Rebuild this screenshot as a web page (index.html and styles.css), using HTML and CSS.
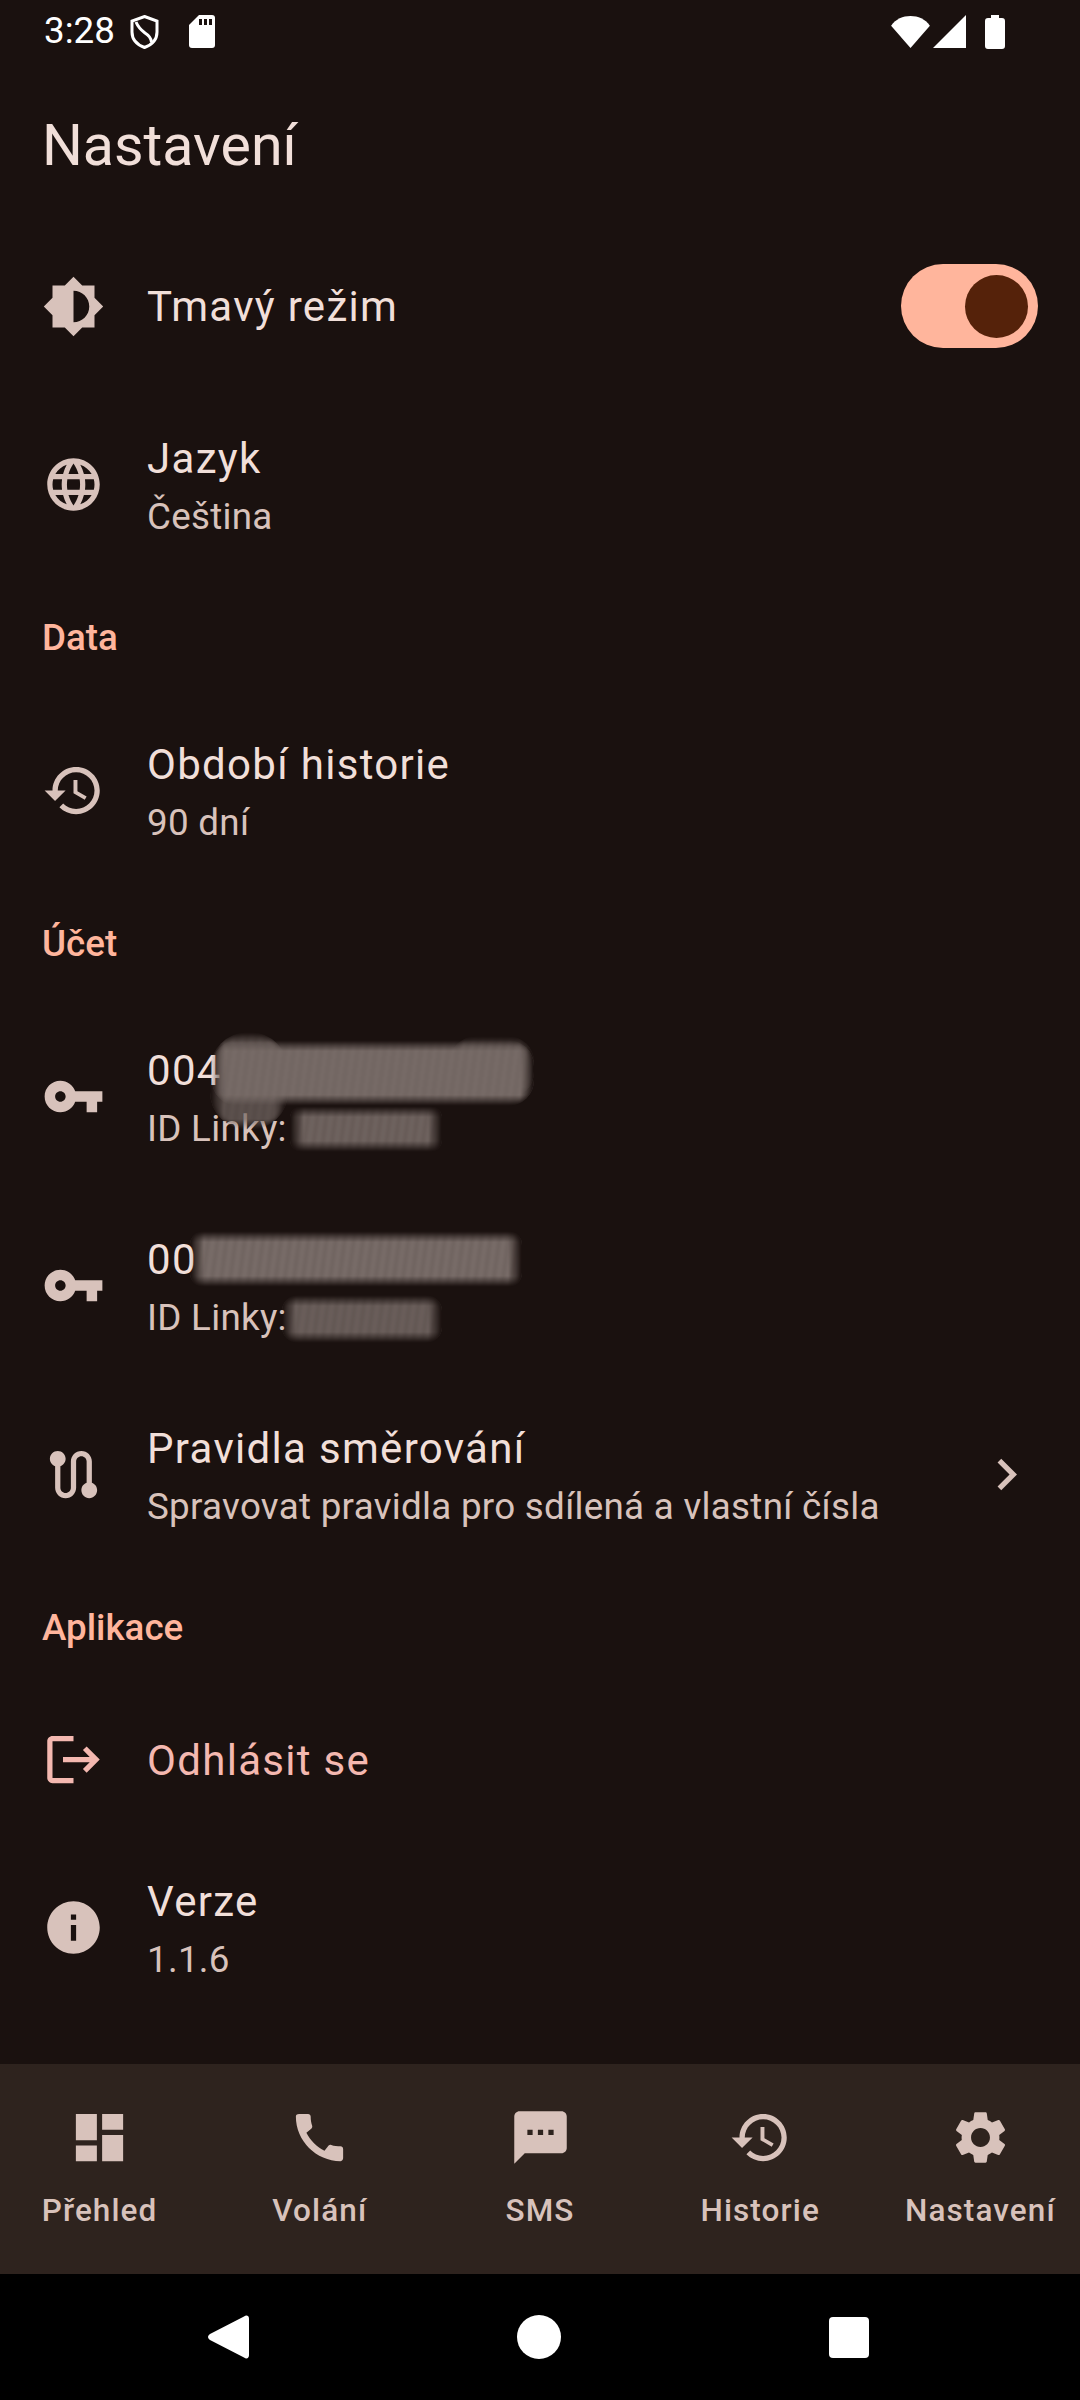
FILE: index.html
```html
<!DOCTYPE html>
<html lang="cs">
<head>
<meta charset="utf-8">
<title>Nastavení</title>
<link rel="stylesheet" href="styles.css">
</head>
<body>
<div class="screen">
  <div class="status">
    <span class="time">3:28</span>
    <svg class="st-shield" viewBox="0 0 29 34"><path d="M14.5 1.5 27 6v11c0 7.5-5.2 12.8-12.5 15.5C7.2 29.8 2 24.5 2 17V6z" fill="none" stroke="#fff" stroke-width="3"/><path d="M6 7c2 5 5 8 9 11 4 2.5 6 5 6.500 9" fill="none" stroke="#fff" stroke-width="3"/></svg>
    <svg class="st-sd" viewBox="0 0 26 33"><path d="M10 0h13a3 3 0 0 1 3 3v27a3 3 0 0 1-3 3H3a3 3 0 0 1-3-3V10z" fill="#fff"/><path d="M10 4h3v6h-3zM15 4h3v6h-3zM20 4h3v6h-3z" fill="#1a110f"/></svg>
    <span class="st-spacer"></span>
    <svg class="st-wifi" viewBox="0 0 40 33"><path d="M20 33 0 10C5 3 12 0 20 0s15 3 20 10z" fill="#fff"/></svg>
    <svg class="st-signal" viewBox="0 0 33 33"><path d="M33 0v33H0z" fill="#fff"/></svg>
    <svg class="st-batt" viewBox="0 0 20 34"><path d="M6 0h8v3h3a3 3 0 0 1 3 3v25a3 3 0 0 1-3 3H3a3 3 0 0 1-3-3V6a3 3 0 0 1 3-3h3z" fill="#fff"/></svg>
  </div>

  <main class="content">
    <h1 class="title">Nastavení</h1>

    <div class="row row-switch">
      <svg class="icon" viewBox="0 0 24 24"><path d="M20 15.31 23.31 12 20 8.69V4h-4.69L12 .69 8.69 4H4v4.690L.69 12 4 15.31V20h4.69L12 23.31 15.31 20H20v-4.690zM12 18V6c3.31 0 6 2.69 6 6s-2.69 6-6 6z"/></svg>
      <div class="texts"><div class="t1">Tmavý režim</div></div>
      <div class="switch"><span class="thumb"></span></div>
    </div>

    <div class="row row-two">
      <svg class="icon" viewBox="0 0 24 24"><path d="M11.99 2C6.47 2 2 6.48 2 12s4.47 10 9.99 10C17.52 22 22 17.52 22 12S17.52 2 11.99 2zm6.93 6h-2.95c-.32-1.25-.78-2.45-1.38-3.56 1.84.63 3.37 1.91 4.33 3.56zM12 4.04c.83 1.2 1.48 2.53 1.91 3.96h-3.82c.43-1.43 1.08-2.76 1.91-3.96zM4.26 14C4.1 13.36 4 12.69 4 12s.1-1.36.26-2h3.38c-.08.66-.14 1.32-.14 2 0 .68.06 1.34.14 2H4.26zm.82 2h2.95c.32 1.25.78 2.45 1.38 3.56-1.84-.63-3.37-1.9-4.33-3.56zm2.95-8H5.08c.96-1.66 2.49-2.93 4.33-3.56C8.81 5.55 8.35 6.75 8.03 8zM12 19.96c-.83-1.2-1.48-2.53-1.91-3.96h3.82c-.43 1.43-1.08 2.76-1.91 3.96zM14.34 14H9.66c-.09-.66-.16-1.32-.16-2 0-.68.07-1.35.16-2h4.68c.09.65.16 1.32.16 2 0 .68-.07 1.34-.16 2zm.25 5.56c.6-1.11 1.06-2.31 1.38-3.56h2.95c-.96 1.65-2.49 2.93-4.33 3.56zM16.36 14c.08-.66.14-1.32.14-2 0-.68-.06-1.34-.14-2h3.38c.16.64.26 1.31.26 2s-.1 1.36-.26 2h-3.38z"/></svg>
      <div class="texts"><div class="t1">Jazyk</div><div class="t2">Čeština</div></div>
    </div>

    <div class="section">Data</div>

    <div class="row row-two">
      <svg class="icon" viewBox="0 0 24 24"><path d="M13 3c-4.97 0-9 4.030-9 9H1l3.89 3.89.07.14L9 12H6c0-3.87 3.13-7 7-7s7 3.13 7 7-3.13 7-7 7c-1.93 0-3.68-.79-4.94-2.060l-1.42 1.42C8.27 19.99 10.51 21 13 21c4.97 0 9-4.030 9-9s-4.030-9-9-9zm-1 5v5l4.28 2.54.72-1.21-3.5-2.08V8H12z"/></svg>
      <div class="texts"><div class="t1">Období historie</div><div class="t2">90 dní</div></div>
    </div>

    <div class="section">Účet</div>

    <div class="row row-two">
      <svg class="icon" viewBox="0 0 24 24"><path d="M12.65 10C11.83 7.67 9.61 6 7 6c-3.31 0-6 2.69-6 6s2.69 6 6 6c2.61 0 4.83-1.67 5.65-4H17v4h4v-4h2v-4H12.65zM7 14c-1.1 0-2-.9-2-2s.9-2 2-2 2 .9 2 2-.9 2-2 2z"/></svg>
      <div class="texts"><div class="t1">004</div><div class="t2">ID Linky:</div></div>
      <span class="smear s1-lobe"></span>
      <span class="smear s1-end"></span>
      <span class="smear s1-band"></span>
      <span class="smear s1-sub"></span>
    </div>

    <div class="row row-two">
      <svg class="icon" viewBox="0 0 24 24"><path d="M12.65 10C11.83 7.67 9.61 6 7 6c-3.31 0-6 2.69-6 6s2.69 6 6 6c2.61 0 4.83-1.67 5.65-4H17v4h4v-4h2v-4H12.65zM7 14c-1.1 0-2-.9-2-2s.9-2 2-2 2 .9 2 2-.9 2-2 2z"/></svg>
      <div class="texts"><div class="t1">00</div><div class="t2">ID Linky:</div></div>
      <span class="smear s2-band"></span>
      <span class="smear s2-sub"></span>
    </div>

    <div class="row row-two">
      <svg class="icon" viewBox="0 0 24 24"><path d="M19 15.18V7c0-2.21-1.79-4-4-4s-4 1.79-4 4v10c0 1.1-.9 2-2 2s-2-.9-2-2V8.82C8.16 8.4 9 7.3 9 6c0-1.66-1.34-3-3-3S3 4.34 3 6c0 1.3.84 2.4 2 2.82V17c0 2.21 1.79 4 4 4s4-1.79 4-4V7c0-1.1.9-2 2-2s2 .9 2 2v8.18c-1.16.41-2 1.51-2 2.82 0 1.66 1.34 3 3 3s3-1.34 3-3c0-1.3-.84-2.4-2-2.82z"/></svg>
      <div class="texts"><div class="t1">Pravidla směrování</div><div class="t2">Spravovat pravidla pro sdílená a vlastní čísla</div></div>
      <svg class="icon" viewBox="0 0 24 24"><path d="M10 6 8.59 7.41 13.17 12l-4.58 4.59L10 18l6-6z"/></svg>
    </div>

    <div class="section">Aplikace</div>

    <div class="row row-one">
      <svg class="icon icon-error" viewBox="0 0 24 24"><path d="M17 7l-1.41 1.41L18.17 11H8v2h10.17l-2.58 2.58L17 17l5-5zM4 5h8V3H4c-1.1 0-2 .9-2 2v14c0 1.100.9 2 2 2h8v-2H4V5z"/></svg>
      <div class="texts"><div class="t1 t-error">Odhlásit se</div></div>
    </div>

    <div class="row row-two">
      <svg class="icon" viewBox="0 0 24 24"><path d="M12 2C6.48 2 2 6.48 2 12s4.48 10 10 10 10-4.48 10-10S17.52 2 12 2zm1 15h-2v-6h2v6zm0-8h-2V7h2v2z"/></svg>
      <div class="texts"><div class="t1">Verze</div><div class="t2">1.1.6</div></div>
    </div>
  </main>

  <nav class="tabs">
    <div class="tab">
      <svg class="icon" viewBox="0 0 24 24"><path d="M3 13h8V3H3v10zm0 8h8v-6H3v6zm10 0h8V11h-8v10zm0-18v6h8V3h-8z"/></svg>
      <span class="tab-label">Přehled</span>
    </div>
    <div class="tab">
      <svg class="icon" viewBox="0 0 24 24"><path d="M20.01 15.38c-1.23 0-2.42-.2-3.53-.56-.35-.12-.74-.03-1.01.24l-1.57 1.97c-2.83-1.35-5.48-3.9-6.89-6.83l1.95-1.66c.27-.28.35-.67.24-1.02-.37-1.11-.56-2.3-.56-3.53 0-.54-.45-.99-.99-.99H4.19C3.65 3 3 3.24 3 3.99 3 13.28 10.73 21 20.01 21c.71 0 .99-.63.99-1.18v-3.45c0-.54-.45-.99-.99-.99z"/></svg>
      <span class="tab-label">Volání</span>
    </div>
    <div class="tab">
      <svg class="icon" viewBox="0 0 24 24"><path d="M20 2H4c-1.1 0-1.99.9-1.99 2L2 22l4-4h14c1.1 0 2-.9 2-2V4c0-1.1-.9-2-2-2zM9 11H7V9h2v2zm4 0h-2V9h2v2zm4 0h-2V9h2v2z"/></svg>
      <span class="tab-label">SMS</span>
    </div>
    <div class="tab">
      <svg class="icon" viewBox="0 0 24 24"><path d="M13 3c-4.97 0-9 4.030-9 9H1l3.89 3.89.07.14L9 12H6c0-3.87 3.13-7 7-7s7 3.13 7 7-3.13 7-7 7c-1.93 0-3.68-.79-4.94-2.060l-1.42 1.42C8.27 19.99 10.51 21 13 21c4.97 0 9-4.030 9-9s-4.030-9-9-9zm-1 5v5l4.28 2.54.72-1.21-3.5-2.08V8H12z"/></svg>
      <span class="tab-label">Historie</span>
    </div>
    <div class="tab">
      <svg class="icon" viewBox="0 0 24 24"><path d="M19.14 12.94c.04-.3.06-.61.06-.94 0-.32-.02-.64-.07-.94l2.03-1.58c.18-.14.23-.41.12-.61l-1.92-3.32c-.12-.22-.37-.29-.59-.22l-2.39.96c-.5-.38-1.03-.7-1.62-.94l-.36-2.54c-.04-.24-.24-.41-.48-.41h-3.84c-.24 0-.43.17-.47.41l-.36 2.54c-.59.24-1.13.57-1.62.94l-2.39-.96c-.22-.08-.47 0-.59.22L2.74 8.87c-.12.21-.08.47.12.61l2.03 1.58c-.05.3-.09.63-.09.94s.02.64.07.94l-2.03 1.58c-.18.14-.23.41-.12.61l1.92 3.32c.12.22.37.29.59.22l2.39-.96c.5.38 1.03.7 1.62.94l.36 2.54c.05.24.24.41.48.41h3.84c.24 0 .44-.17.47-.41l.36-2.54c.59-.24 1.13-.56 1.62-.94l2.39.96c.22.08.47 0 .59-.22l1.92-3.32c.12-.22.07-.47-.12-.61l-2.01-1.58zM12 15.6c-1.98 0-3.6-1.62-3.6-3.6s1.62-3.6 3.6-3.6 3.6 1.62 3.6 3.6-1.62 3.6-3.6 3.6z"/></svg>
      <span class="tab-label">Nastavení</span>
    </div>
  </nav>

  <div class="sysnav">
    <svg class="sys-back" viewBox="0 0 41 44"><path d="M36 1.500c2.500-1.800 5-.8 5 2.200v36.600c0 3-2.500 4-5 2.200L2 25c-2.600-1.800-2.600-4.200 0-6z" fill="#fff"/></svg>
    <span class="sys-home"></span>
    <span class="sys-recent"></span>
  </div>
</div>
</body>
</html>
```

FILE: styles.css
```css
* { box-sizing: border-box; }
html, body { margin: 0; padding: 0; }
body { background: #1a110f; font-family: Roboto, "Noto Sans", sans-serif; }

.screen {
  width: 1080px;
  height: 2400px;
  display: flex;
  flex-direction: column;
  background: #1a110f;
  overflow: hidden;
}

/* Status bar */
.status {
  height: 63px;
  flex: none;
  display: flex;
  align-items: center;
  padding: 0 75px 0 44px;
  color: #fff;
}
.time { font-size: 36.75px; line-height: 1; letter-spacing: 0; margin-right: 15px; }
.st-shield { width: 29px; height: 34px; margin-right: 30px; }
.st-sd { width: 26px; height: 33px; }
.st-spacer { flex: 1; }
.st-wifi { width: 39px; height: 32px; margin-right: 3px; }
.st-signal { width: 33px; height: 33px; margin-right: 19px; }
.st-batt { width: 20px; height: 34px; }

/* Content */
.content { flex: 1; min-height: 0; }
.title {
  margin: 0;
  height: 159px;
  padding: 6px 42px 0;
  display: flex;
  align-items: center;
  font-size: 57.3px;
  font-weight: 400;
  color: #f1dfd9;
}

.row {
  position: relative;
  display: flex;
  align-items: center;
  gap: 42px;
  padding: 0 42px;
}
.row-switch { height: 168px; }
.row-one { height: 147px; }
.row-two { height: 189px; }

.icon { width: 63px; height: 63px; flex: none; fill: #d8c2bb; }
.icon-error { fill: #f4b8b0; }
.texts { flex: 1; min-width: 0; padding-top: 1px; }
.t1 { font-size: 42px; line-height: 63px; letter-spacing: 1.31px; color: #f1dfd9; }
.t2 { margin-top: 1px; font-size: 36.75px; line-height: 52.5px; letter-spacing: 0.29px; color: #d8c2bb; }
.t-error { color: #f4b8b0; }

.section {
  height: 117px;
  display: flex;
  align-items: center;
  padding: 0 42px;
  font-size: 36.75px;
  font-weight: 500;
  letter-spacing: 0;
  color: #ffb59c;
}

/* Switch */
.switch {
  width: 137px;
  height: 84px;
  flex: none;
  border-radius: 42px;
  background: #ffb59c;
  display: flex;
  align-items: center;
  justify-content: flex-end;
  padding-right: 10px;
}
.thumb { width: 63px; height: 63px; border-radius: 50%; background: #55220a; }

/* Redaction smears (lie over the masked text) */
.smear {
  position: absolute;
  display: block;
  background-color: #6f6460;
  background-image: repeating-linear-gradient(98deg, rgba(40,30,28,.2) 0 3px, rgba(216,194,188,.14) 3px 9px);
  filter: blur(2.4px);
  -webkit-mask-image: linear-gradient(to right, transparent, #000 14px, #000 calc(100% - 14px), transparent), linear-gradient(to bottom, transparent, #000 11px, #000 calc(100% - 11px), transparent);
  -webkit-mask-composite: source-in;
  mask-image: linear-gradient(to right, transparent, #000 14px, #000 calc(100% - 14px), transparent), linear-gradient(to bottom, transparent, #000 11px, #000 calc(100% - 11px), transparent);
  mask-composite: intersect;
  border-radius: 26px;
}
.s1-band { left: 212px; top: 38px; width: 322px; height: 66px; background-image: repeating-linear-gradient(98deg, rgba(40,30,28,.08) 0 3px, rgba(216,194,188,.1) 3px 9px); }
.s1-lobe { left: 210px; top: 30px; width: 78px; height: 98px; border-radius: 38px; opacity: .7; }
.s1-end { left: 450px; top: 34px; width: 84px; height: 62px; opacity: .55; }
.s1-sub { left: 290px; top: 104px; width: 152px; height: 46px; border-radius: 12px; opacity: .9; }
.s2-band { left: 190px; top: 40px; width: 332px; height: 56px; border-radius: 14px; }
.s2-sub { left: 282px; top: 104px; width: 160px; height: 48px; border-radius: 16px; opacity: .85; }

/* Bottom navigation */
.tabs {
  height: 210px;
  flex: none;
  display: flex;
  gap: 21px;
  background: #2e231e;
}
.tab {
  flex: 1;
  min-width: 0;
  display: flex;
  flex-direction: column;
  align-items: center;
  padding-top: 42px;
  color: #d8c2bb;
}
.tab-label {
  margin-top: 21px;
  font-size: 31.5px;
  line-height: 42px;
  font-weight: 500;
  letter-spacing: 1.1px;
  white-space: nowrap;
}

/* System navigation */
.sysnav {
  height: 126px;
  flex: none;
  background: #000;
  display: flex;
  align-items: center;
  padding: 0 0 0 208px;
}
.sys-back { width: 41px; height: 44px; margin-right: 268px; }
.sys-home { width: 44px; height: 44px; border-radius: 50%; background: #fff; margin-right: 268px; }
.sys-recent { width: 40px; height: 41px; border-radius: 4px; background: #fff; }
```
